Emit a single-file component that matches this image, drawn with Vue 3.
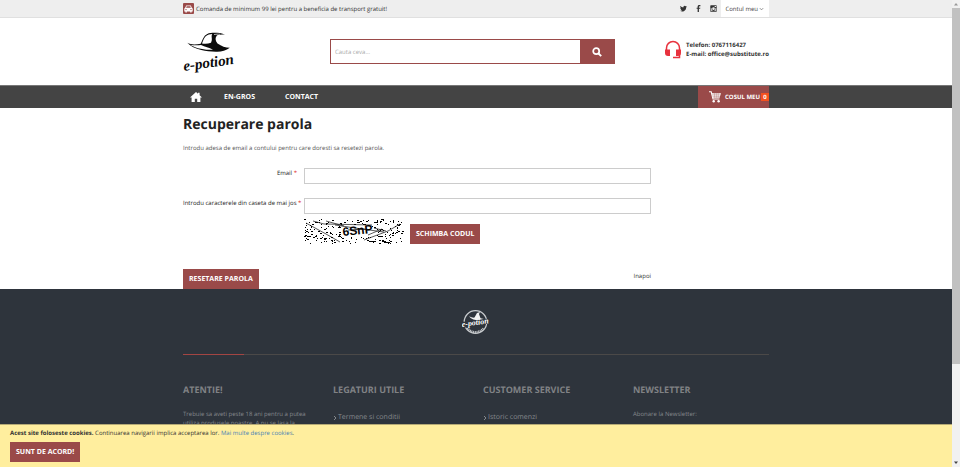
<script setup>
import { ref } from 'vue'

const query = ref('')
const email = ref('')
const code = ref('')

// Deterministic speckle for the captcha background
function makeNoise(seedStart) {
  let seed = seedStart
  const next = () => {
    seed = (seed * 16807) % 2147483647
    return seed / 2147483647
  }
  let d = ''
  for (let i = 0; i < 240; i++) {
    const x = Math.floor(next() * 99)
    const y = Math.floor(next() * 25)
    const w = next() > 0.75 ? 2 : 1
    if (x > 36 && x < 68 && y > 5 && y < 18) continue
    d += `M${x} ${y}h${w}v1h-${w}z`
  }
  return d
}
const noise = ref(makeNoise(4217))
function changeCode() {
  noise.value = makeNoise(Math.floor(Math.random() * 100000) + 1)
}
</script>

<template>
  <div class="window">
    <div class="page">
      <div class="topbar">
        <div class="container topbar-row">
          <p class="promo">
            <svg class="car" viewBox="0 0 11 11" aria-hidden="true">
              <rect width="11" height="11" rx="1" fill="#9a4a49" />
              <path d="M3.2 2.4h4.6l1 2.4.9.8v2.900H8.600v1H7.200v-1H3.800v1H2.400v-1H1.300V5.600l.9-.8z" fill="#fff" />
              <path d="M3.700 3.200h3.600l.6 1.600H3.100z" fill="#9a4a49" />
              <circle cx="3" cy="6.600" r=".7" fill="#9a4a49" />
              <circle cx="8" cy="6.600" r=".7" fill="#9a4a49" />
            </svg>
            <span>Comanda de minimum 99 lei pentru a beneficia de transport gratuit!</span>
          </p>
          <nav class="social">
            <a href="#" aria-label="Twitter">
              <svg viewBox="0 0 24 24"><path d="M23.600 4.900c-.9.4-1.800.6-2.800.8 1-.6 1.800-1.600 2.100-2.700-.9.6-2 1-3.100 1.200A4.900 4.900 0 0 0 11.500 8.700 13.900 13.900 0 0 1 1.400 3.600a4.900 4.900 0 0 0 1.500 6.500c-.8 0-1.600-.2-2.200-.6 0 2.400 1.600 4.400 3.900 4.900-.7.2-1.500.2-2.200.1.600 2 2.400 3.400 4.600 3.400A9.900 9.900 0 0 1 0 19.900 13.900 13.900 0 0 0 21.400 7.500c.9-.7 1.700-1.600 2.200-2.600z" /></svg>
            </a>
            <a href="#" aria-label="Facebook">
              <svg viewBox="0 0 24 24"><path d="M9 24V13H5.500V9H9V6c0-4 2.200-6 5.800-6 1.600 0 3 .1 3.700.2v3.900H16c-2 0-2.500 1-2.500 2.400V9h4.800l-.7 4h-4.100v11z" /></svg>
            </a>
            <a href="#" aria-label="Instagram">
              <svg viewBox="0 0 24 24"><path fill-rule="evenodd" d="M3 1h18a2 2 0 0 1 2 2v18a2 2 0 0 1-2 2H3a2 2 0 0 1-2-2V3a2 2 0 0 1 2-2zm0 9v10h18V10h-2.500a7 7 0 1 1-13 0zM16 3v4h5V3zm-4 5a4.500 4.500 0 1 0 0 9 4.500 4.500 0 0 0 0-9z" /></svg>
            </a>
          </nav>
          <button class="account" type="button">
            Contul meu
            <svg viewBox="0 0 6 4"><path d="M1 1l2 2 2-2" fill="none" stroke="#777" /></svg>
          </button>
        </div>
      </div>

      <header class="container header">
        <a class="logo" href="#" aria-label="e-potion">
          <svg viewBox="0 0 52 44">
            <path d="M4.300 12.800C8 15 13 14.500 17.700 13.800 19 11 20 8 22 5.500c3-2.500 6-3 9-2.700 4 .1 8 .2 11 2-3-.6-5-.3-8 .5-2 2.500-2 5 .5 8.200 4 2.800 8 4.300 12.300 4.300-4 3-9 4.200-14 3.900-5-.2-10-.3-14.500-1.700C12.500 18.500 7.500 16.500 4.300 12.800z" fill="#0b0b0b" />
            <path d="M7 14.700c4 .9 8 .7 11 .4 4 1.700 8 2.700 12 4.700-5 .3-16-.6-23-5.100zM19 13.400c1-2.800 2-5.200 3.700-7.200 2-1.500 4.300-2.200 6.500-2.200-1.500 2.500.8 5-1.200 8.700-3 1.100-6 1.200-9 .7z" fill="#fff" />
            <path d="M31 4.500c2-.4 4-.5 6-.3" fill="none" stroke="#fff" stroke-width=".7" />
            <text x="1" y="41" transform="rotate(-8 1 41)" class="wordmark">e-potion</text>
          </svg>
        </a>
        <form class="search" @submit.prevent>
          <input v-model="query" type="text" aria-label="Cauta" placeholder="Cauta ceva..." />
          <button type="submit" aria-label="Cauta">
            <svg viewBox="0 0 10 10"><circle cx="4.200" cy="4.200" r="3" fill="none" stroke="#fff" stroke-width="1.700" /><path d="M6.500 6.500l2.700 2.700" stroke="#fff" stroke-width="1.900" /></svg>
          </button>
        </form>
        <div class="contact">
          <svg viewBox="0 0 16 19" aria-hidden="true">
            <path d="M1.500 11V8a6.500 6.500 0 0 1 13 0v3" fill="none" stroke="#e8323e" stroke-width="1.500" />
            <path d="M0 9.500h5V16H3a3 3 0 0 1-3-3zM11 9.500H16V13a3 3 0 0 1-3 3h-2z" fill="#e8323e" />
            <path d="M14.500 14v3.600H8" fill="none" stroke="#e8323e" stroke-width="1.500" />
          </svg>
          <p>Telefon: 0767116427<br />E-mail: office@substitute.ro</p>
        </div>
      </header>

      <div class="navbar">
        <div class="container navbar-row">
          <nav class="menu">
            <a class="home" href="#" aria-label="Acasa">
              <svg viewBox="0 0 12 10"><path d="M6 0l2 1.800V.8h1.600v2.500L12 5.600H10.400V10H7.200V6.800H4.800V10H1.600V5.600H0z" fill="#fff" /></svg>
            </a>
            <a class="item" href="#">EN-GROS</a>
            <a class="item" href="#">CONTACT</a>
          </nav>
          <a class="cart" href="#">
            <svg viewBox="0 0 12 12"><path d="M0 .8h2.200L4 8h6.500" fill="none" stroke="#fff" stroke-width="1.100" /><path d="M2.600 2.200H12L10.600 6.800H3.800z" fill="#fff" /><path d="M3 3.800h8.500M3.500 5.300h7.800M5.400 2.200v4.500M7.300 2.200v4.500M9.200 2.200v4.500" stroke="#9a4a49" stroke-width=".35" /><circle cx="4.700" cy="10.300" r="1.200" fill="#fff" /><circle cx="9.600" cy="10.300" r="1.200" fill="#fff" /></svg>
            <span>COSUL MEU</span>
            <span class="badge">0</span>
          </a>
        </div>
      </div>

      <main class="container main">
        <h1>Recuperare parola</h1>
        <p class="intro">Introdu adesa de email a contului pentru care doresti sa resetezi parola.</p>
        <form @submit.prevent>
          <div class="field">
            <label class="short" for="email">Email <i>*</i></label>
            <input id="email" v-model="email" type="email" />
          </div>
          <div class="field">
            <label for="code">Introdu caracterele din caseta de mai jos <i>*</i></label>
            <input id="code" v-model="code" type="text" />
          </div>
          <div class="captcha">
            <svg viewBox="0 0 100 25" role="img" aria-label="Captcha">
              <path :d="noise" />
              <path d="M9 2l11 3 48 1M31 6l27 4 22 3M60 21l24-9 12-7M2 4l20 11 14 8M64 16l14-6M22 2l18 5M70 9l12 3" fill="none" stroke="#111" stroke-width=".7" />
              <text x="39" y="17" transform="rotate(-6 39 17)" class="captcha-code">6SnP</text>
              <path d="M44 11l18-1" stroke="#111" stroke-width=".8" />
            </svg>
            <button class="btn" type="button" @click="changeCode">SCHIMBA CODUL</button>
          </div>
          <div class="actions">
            <button class="btn" type="submit">RESETARE PAROLA</button>
            <a href="#">Inapoi</a>
          </div>
        </form>
      </main>

      <footer class="footer">
        <div class="container">
          <div class="footer-logo">
            <svg viewBox="0 0 28 26" role="img" aria-label="e-potion">
              <circle cx="13.500" cy="13" r="11.300" fill="none" stroke="#c9cccf" stroke-width="1.200" />
              <path d="M5.500 19a10 10 0 0 0 16 0" fill="none" stroke="#c9cccf" stroke-width="2" stroke-dasharray="1 .7" />
              <path d="M7 7.500c2 .5 4 1.500 5.500 1L15 4l3-1-1 2 1.500 4.200 3.500.8c-5 2.500-11 1.500-15-2.500z" fill="#f2f2f2" />
              <path d="M0 13l27-3.500v5L1 19z" fill="#2e343c" />
              <text x="0" y="18" transform="rotate(-8 0 18)" class="stamp">e-potion</text>
            </svg>
          </div>
          <div class="divider"><span></span></div>
          <div class="columns">
            <section>
              <h2>ATENTIE!</h2>
              <p>Trebuie sa aveti peste 18 ani pentru a putea utiliza produsele noastre. A nu se lasa la</p>
            </section>
            <section>
              <h2>LEGATURI UTILE</h2>
              <a href="#"><svg viewBox="0 0 4 6"><path d="M1 1l2 2-2 2" /></svg>Termene si conditii</a>
            </section>
            <section>
              <h2>CUSTOMER SERVICE</h2>
              <a href="#"><svg viewBox="0 0 4 6"><path d="M1 1l2 2-2 2" /></svg>Istoric comenzi</a>
            </section>
            <section>
              <h2>NEWSLETTER</h2>
              <p>Abonare la Newsletter:</p>
            </section>
          </div>
        </div>
      </footer>

      <aside class="cookies">
        <p><b>Acest site foloseste cookies.</b> Continuarea navigarii implica acceptarea lor. <a href="#">Mai multe despre cookies</a>.</p>
        <button class="btn" type="button">SUNT DE ACORD!</button>
      </aside>
    </div>
    <div class="scrollbar" aria-hidden="true">
      <svg viewBox="0 0 8 8"><path d="M2 5.500l2-2.500 2 2.500z" fill="#999" /></svg>
      <div class="track"><span class="thumb"></span></div>
      <svg viewBox="0 0 8 8"><path d="M2 2.500l2 2.500 2-2.500z" fill="#444" /></svg>
    </div>
  </div>
</template>

<style>
body {
  margin: 0;
  overflow: hidden;
}
</style>

<style scoped>
* {
  box-sizing: border-box;
}
.window {
  display: flex;
  height: 100vh;
  font-family: "Open Sans", "Noto Sans", sans-serif;
  font-size: 6px;
  line-height: 10px;
  color: #333;
  background: #fff;
  text-rendering: geometricPrecision;
}
.page {
  position: relative;
  flex: 1;
  min-width: 0;
  overflow: hidden;
  display: flex;
  flex-direction: column;
}
p, h1, h2 {
  margin: 0;
}
a {
  color: inherit;
  text-decoration: none;
}
svg {
  display: block;
  flex: none;
}
button, input {
  font: inherit;
  text-rendering: inherit;
  border: 0;
  border-radius: 0;
  padding: 0;
}
.container {
  width: 100%;
  max-width: 586px;
  margin: 0 auto;
}
.topbar {
  background: #eee;
  border-bottom: 1px solid #e0e0e0;
}
.topbar-row {
  display: flex;
  align-items: center;
  height: 17px;
}
.promo {
  flex: 1;
  display: flex;
  align-items: center;
  gap: 2px;
}
.car {
  width: 11px;
  height: 11px;
}
.social {
  display: flex;
  gap: 8px;
  margin-right: 4px;
}
.social svg {
  width: 7px;
  height: 7px;
  fill: #333;
}
.account {
  display: flex;
  align-items: center;
  gap: 1px;
  height: 17px;
  padding: 0 5px 0 4px;
  background: #fff;
  color: #444;
  white-space: nowrap;
}
.account svg {
  width: 5px;
  height: 4px;
}
.header {
  display: flex;
  align-items: center;
  height: 67px;
}
.logo svg {
  width: 52px;
  height: 44px;
  overflow: visible;
}
.wordmark {
  font: italic bold 15px "Liberation Serif", serif;
  fill: #0b0b0b;
}
.search {
  display: flex;
  width: 285px;
  height: 25px;
  margin-left: 95px;
  border: 1px solid #9a4a49;
}
.search input {
  flex: 1;
  min-width: 0;
  padding: 0 4px;
  outline: 0;
}
.search input::placeholder {
  color: #aaa;
}
.search button {
  width: 34px;
  display: grid;
  place-items: center;
  background: #9a4a49;
}
.search button svg {
  width: 10px;
  height: 10px;
}
.contact {
  display: flex;
  align-items: center;
  gap: 5px;
  margin-left: auto;
  margin-bottom: 4px;
  font-weight: 700;
  line-height: 9px;
}
.contact svg {
  width: 16px;
  height: 19px;
}
.navbar {
  background: #444;
  border-top: 1px solid #777;
  color: #fff;
}
.navbar-row {
  display: flex;
  justify-content: space-between;
  height: 22px;
}
.menu {
  display: flex;
  align-items: center;
  padding-left: 7px;
  gap: 30px;
  font-size: 7px;
  font-weight: 700;
}
.item {
  padding-top: 2px;
}
.home {
  margin-right: -8px;
}
.home svg {
  width: 12px;
  height: 10px;
}
.cart {
  display: flex;
  align-items: center;
  gap: 4px;
  padding-left: 11px;
  background: #9a4a49;
  font-weight: 700;
}
.cart svg {
  width: 12px;
  height: 12px;
}
.badge {
  width: 8px;
  line-height: 8px;
  margin-left: -3px;
  background: #f4511e;
  text-align: center;
}
.main h1 {
  padding-top: 7px;
  font-size: 14px;
  line-height: 20px;
  font-weight: 700;
  color: #222;
}
.intro {
  margin-top: 8px;
  color: #555;
}
.field {
  display: flex;
  width: 468px;
  max-width: 100%;
  margin-top: 14px;
}
.intro + form .field:first-child {
  margin-top: 15px;
}
.field label {
  width: 121px;
  flex: none;
  font-weight: 500;
  color: #222;
  white-space: nowrap;
}
.field label.short {
  padding-right: 7px;
  text-align: right;
}
.field i {
  color: #e02b27;
  font-style: normal;
}
.field input {
  flex: 1;
  min-width: 0;
  height: 16px;
  padding: 0 4px;
  border: 1px solid #ccc;
}
.captcha {
  display: flex;
  align-items: flex-end;
  gap: 6px;
  margin: 5px 0 0 121px;
}
.captcha svg {
  width: 100px;
  height: 25px;
}
.captcha-code {
  font: bold 12px "Liberation Sans", sans-serif;
}
.btn {
  height: 20px;
  padding: 1px 6px 0;
  background: #9a4a49;
  color: #fff;
  font-size: 7px;
  font-weight: 700;
}
.actions {
  display: flex;
  justify-content: space-between;
  width: 468px;
  max-width: 100%;
  margin-top: 25px;
}
.actions a {
  padding-top: 2px;
}
.footer {
  flex: 1 0 auto;
  background: #2e343c;
  color: #85888c;
}
.footer-logo {
  display: flex;
  justify-content: center;
  padding-top: 20px;
}
.footer-logo svg {
  width: 28px;
  height: 26px;
}
.stamp {
  font: italic bold 8px "Liberation Serif", serif;
  fill: #fff;
}
.divider {
  margin-top: 19px;
  background: #4b4948;
}
.divider span {
  display: block;
  width: 61px;
  height: 1px;
  background: #a34543;
}
.columns {
  display: grid;
  grid-template-columns: repeat(4, 1fr);
  column-gap: 14px;
  padding-top: 28px;
}
.columns h2 {
  margin-bottom: 13px;
  font-size: 9px;
  line-height: 14px;
  font-weight: 700;
  color: #808285;
}
.columns p {
  line-height: 9px;
}
.columns a {
  display: flex;
  align-items: center;
  gap: 1px;
  padding-top: 3px;
  font-size: 7px;
}
.columns a svg {
  width: 4px;
  height: 6px;
  fill: none;
  stroke: currentColor;
}
.cookies {
  position: absolute;
  inset: auto 0 0;
  padding: 3px 10px 5px;
  border-top: 1px solid #b5aa76;
  background: #ffee9e;
}
.cookies a {
  color: #4a83b5;
}
.cookies .btn {
  margin-top: 4px;
}
.scrollbar {
  display: flex;
  flex-direction: column;
  width: 8px;
  background: #f1f1f1;
}
.scrollbar svg {
  width: 8px;
  height: 8px;
}
.track {
  flex: 1;
}
.thumb {
  display: block;
  height: 79%;
  background: #c1c1c1;
}
</style>
